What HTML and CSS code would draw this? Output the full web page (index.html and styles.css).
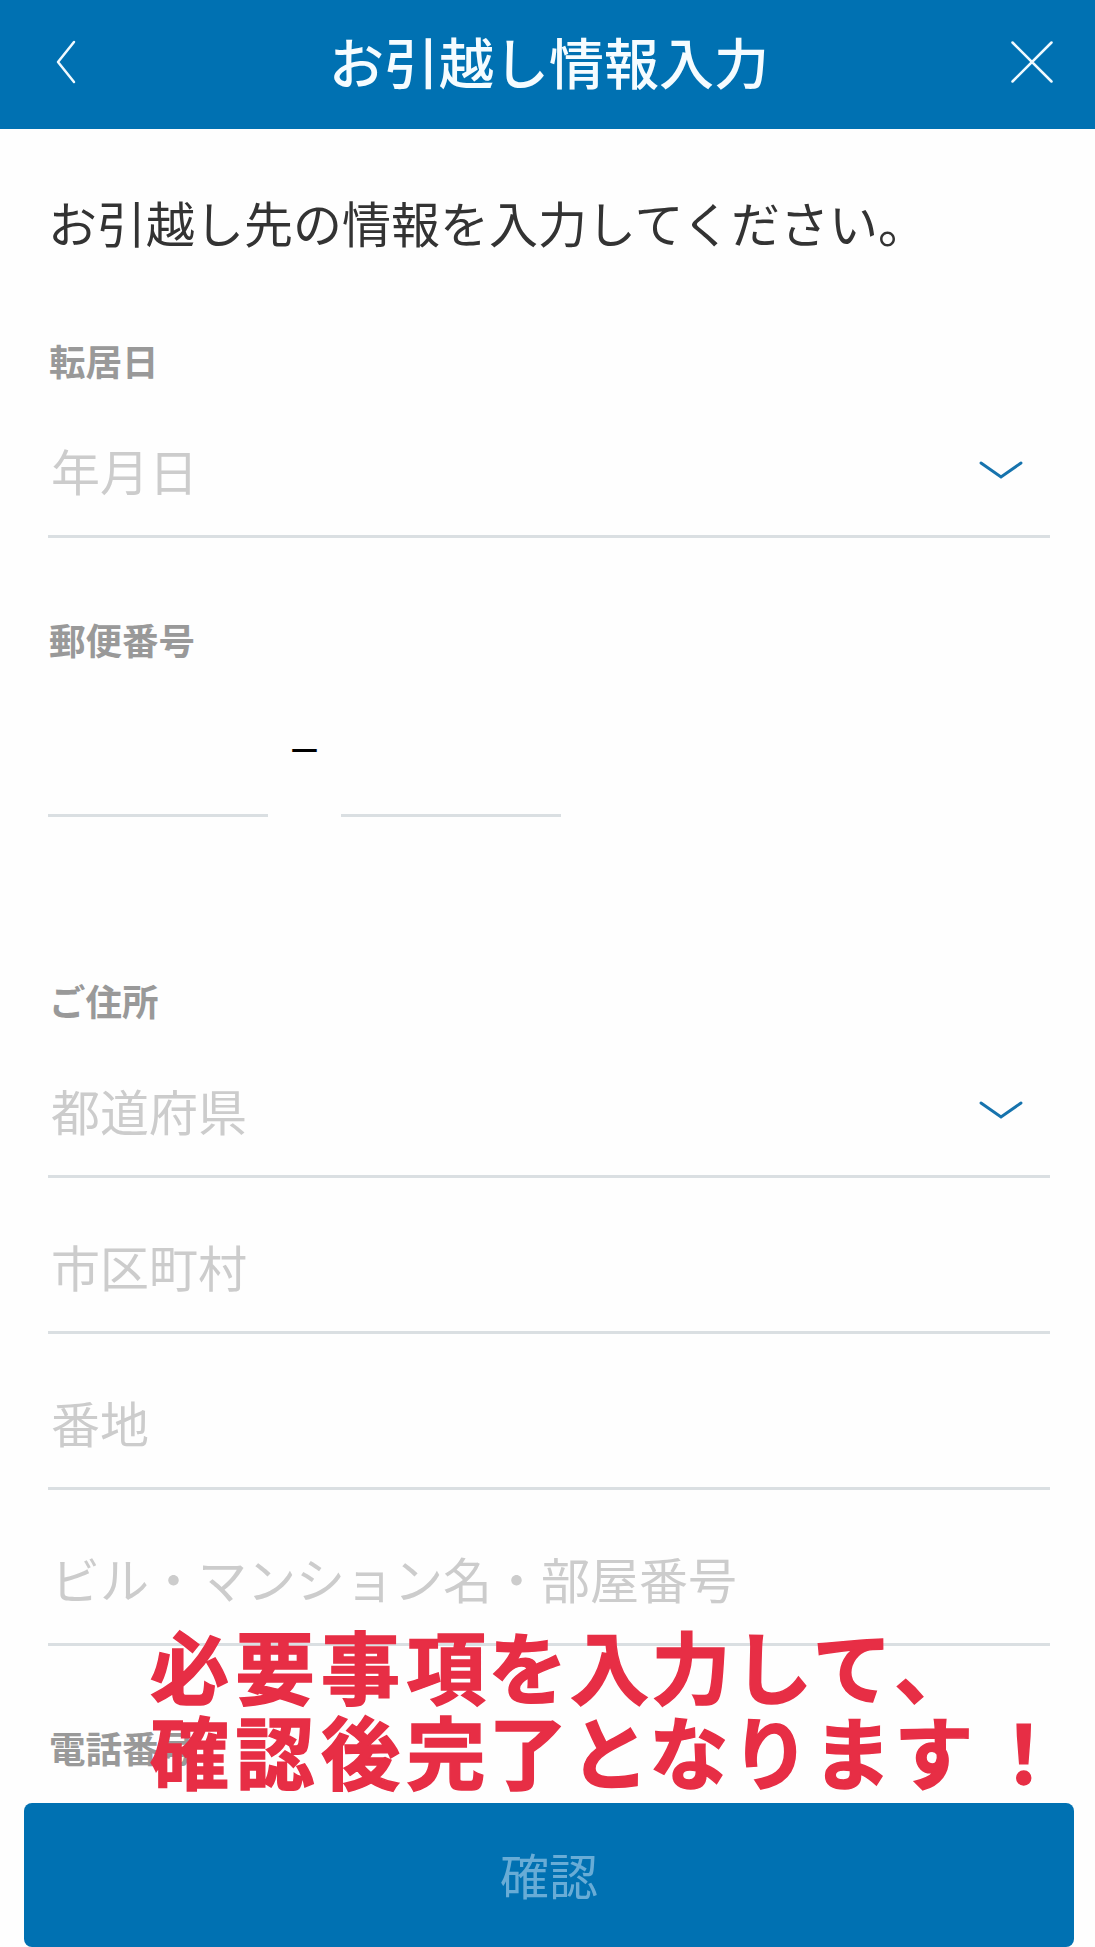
FILE: index.html
```html
<!DOCTYPE html>
<html lang="ja">
<head>
    <meta charset="UTF-8">
    <meta name="viewport" content="width=device-width, initial-scale=1.0">
    <title>お引越し情報入力</title>
    <link rel="stylesheet" href="styles.css">
</head>
<body>
    <header class="header">
        <button class="icon-btn" type="button" aria-label="戻る">
            <svg width="22" height="46" viewBox="0 0 22 46"><path d="M19 3L3 23L19 43"/></svg>
        </button>
        <h1 class="title">お引越し情報入力</h1>
        <button class="icon-btn" type="button" aria-label="閉じる">
            <svg width="44" height="44" viewBox="0 0 44 44"><path d="M2.500 2.500L41.500 41.500M41.500 2.500L2.500 41.500"/></svg>
        </button>
    </header>

    <main class="form">
        <p class="intro">お引越し先の情報を入力してください。</p>

        <section class="group">
            <h2 class="label">転居日</h2>
            <div class="field">
                <span>年月日</span>
                <svg class="arrow" width="46" height="20" viewBox="0 0 46 20"><path d="M3 3L23 17L43 3"/></svg>
            </div>
        </section>

        <section class="group zip-group">
            <h2 class="label">郵便番号</h2>
            <div class="zip">
                <div class="field zip-field"></div>
                <span class="zip-dash">–</span>
                <div class="field zip-field"></div>
            </div>
        </section>

        <section class="group">
            <h2 class="label">ご住所</h2>
            <div class="fields">
                <div class="field">
                    <span>都道府県</span>
                    <svg class="arrow" width="46" height="20" viewBox="0 0 46 20"><path d="M3 3L23 17L43 3"/></svg>
                </div>
                <div class="field"><span>市区町村</span></div>
                <div class="field"><span>番地</span></div>
                <div class="field"><span>ビル・マンション名・部屋番号</span></div>
            </div>
        </section>

        <section class="group">
            <h2 class="label">電話番号</h2>
        </section>
    </main>

    <!-- Caption over the form -->
    <p class="caption">必要事<span class="tight">項を入力して</span>、<br>確認後<span class="tight">完了となりま</span><span class="wide">す</span>！</p>

    <footer class="footer">
        <button class="submit" type="button">確認</button>
    </footer>
</body>
</html>
```

FILE: styles.css
```css
* {
    margin: 0;
    padding: 0;
    box-sizing: border-box;
}

body {
    position: relative;
    display: flex;
    flex-direction: column;
    height: 1947px;
    overflow: hidden;
    background: #fefefe;
    font-family: "Noto Sans CJK JP", sans-serif;
    color: #333;
}

.header {
    display: flex;
    justify-content: space-between;
    align-items: center;
    height: 129px;
    padding: 0 41px 5px 55px;
    background: #0071b2;
}

.icon-btn {
    display: flex;
    width: 44px;
    background: none;
    border: none;
    cursor: pointer;
}

.icon-btn svg {
    fill: none;
    stroke: #f0faff;
    stroke-width: 2.5;
    stroke-linecap: round;
    stroke-linejoin: round;
}

.title {
    font-size: 55px;
    font-weight: 500;
    line-height: 70px;
    color: #f5fcff;
    padding: 0 11px 5px 0;
}

.form {
    flex: 1;
    min-height: 0;
    padding: 58px 45px 0 48px;
}

.intro {
    font-size: 49px;
    line-height: 70px;
    margin-bottom: 77px;
    white-space: nowrap;
}

.group {
    margin-bottom: 75px;
}

.zip-group {
    margin-bottom: 157px;
}

.label {
    font-size: 36.5px;
    font-weight: 700;
    line-height: 54px;
    margin-bottom: 20px;
    padding-left: 1px;
    color: #999;
}

.fields {
    display: flex;
    flex-direction: column;
    gap: 26px;
}

.field {
    display: flex;
    justify-content: space-between;
    align-items: center;
    height: 130px;
    padding: 0 26px 4px 3px;
    border-bottom: 3px solid #dadfe2;
    font-size: 49px;
    line-height: 70px;
    color: #ccc;
}

.arrow {
    fill: none;
    stroke: #1673ad;
    stroke-width: 3;
    stroke-linecap: round;
}

.zip {
    display: flex;
}

.zip-field {
    width: 220px;
}

.zip-dash {
    width: 73px;
    text-align: center;
    font-family: "Liberation Sans", sans-serif;
    font-size: 44px;
    line-height: 119px;
    color: #000;
}

.caption {
    position: absolute;
    left: 150px;
    top: 1622px;
    font-size: 79px;
    font-weight: 700;
    line-height: 85px;
    letter-spacing: 6.5px;
    color: #e72e45;
    -webkit-text-stroke: 1.5px #e72e45;
    white-space: nowrap;
}

.tight {
    letter-spacing: 2.7px;
}

.wide {
    letter-spacing: 11px;
}

.footer {
    padding: 0 21px 0 24px;
}

.submit {
    display: block;
    width: 100%;
    height: 144px;
    padding-bottom: 3px;
    border: none;
    border-radius: 8px;
    background: #0071b2;
    font-family: inherit;
    font-size: 49px;
    color: #68acd6;
    cursor: pointer;
}
```
